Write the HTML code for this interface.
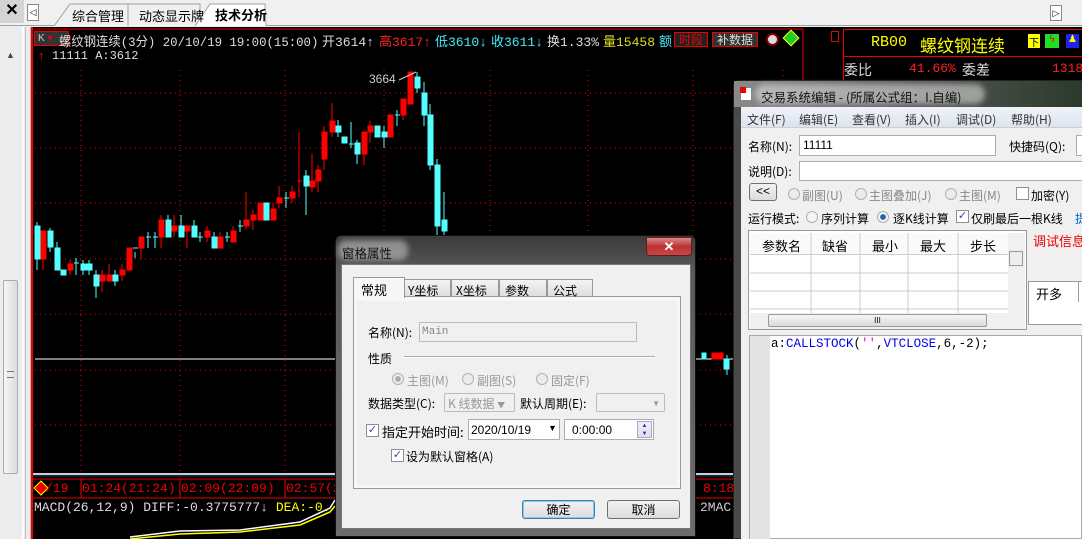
<!DOCTYPE html>
<html><head><meta charset="utf-8">
<style>
*{margin:0;padding:0;box-sizing:border-box}
body{width:1082px;height:539px;overflow:hidden;background:#f0f0f0;position:relative;font-family:"Liberation Sans","WenQuanYi Zen Hei",sans-serif;font-size:12px}
.a{position:absolute;white-space:nowrap}
.m{font-family:"Liberation Mono","WenQuanYi Zen Hei",monospace}
.cj{font-family:"WenQuanYi Zen Hei","Noto Sans CJK SC",sans-serif}
.inp{position:absolute;background:#fff;border:1px solid #abadb3}
.btn{position:absolute;border:1px solid #707070;border-radius:3px;background:linear-gradient(#f2f2f2,#dcdcdc);text-align:center;line-height:17px}
.rad{position:absolute;width:12px;height:12px;border-radius:50%;border:1px solid #b0b0b0;background:#ececec}
.chk{position:absolute;width:13px;height:13px;border:1px solid #8e8f8f;background:#fff;font-size:11px;line-height:11px;text-align:center;color:#2a4a9a}
</style></head><body>
<div class="a" style="left:0;top:0;width:1082px;height:26px;background:#f0f0f0;border-bottom:1px solid #a0a0a0"></div>
<div class="a" style="left:0;top:0;width:24px;height:23px;background:#d4d4d4;font-size:16px;text-align:center;line-height:22px;font-weight:bold">✕</div>
<div class="a" style="left:27px;top:4px;width:12px;height:17px;border:1px solid #888;background:#fff;font-size:9px;line-height:15px;text-align:center">◁</div>
<div class="a" style="left:1050px;top:5px;width:12px;height:16px;border:1px solid #888;background:#fff;font-size:9px;line-height:14px;text-align:center">▷</div>
<svg class="a" style="left:50px;top:3px" width="230" height="24"><path d="M4 23 L20 1 L78 1 L78 23" fill="#f0f0f0" stroke="#a0a0a0"/><path d="M78 23 L78 1 L150 1 L150 23" fill="#f0f0f0" stroke="#a0a0a0"/><path d="M145 23 L160 1 L215 1 L216 23" fill="#fff" stroke="#a0a0a0"/></svg>
<div class="a cj" style="left:72px;top:6px;font-size:13px">综合管理</div>
<div class="a cj" style="left:139px;top:6px;font-size:13px">动态显示牌</div>
<div class="a cj" style="left:215px;top:5px;font-size:13px;font-weight:bold">技术分析</div>
<div class="a" style="left:0;top:27px;width:31px;height:512px;background:#ececec;border-right:1px solid #b8b8b8"></div>
<div class="a" style="left:22px;top:27px;width:2px;height:512px;background:#fff"></div>
<div class="a" style="left:25px;top:27px;width:1px;height:512px;background:#c0c0c0"></div>
<div class="a" style="left:6px;top:50px;font-size:9px;color:#444">▲</div>
<div class="a" style="left:3px;top:280px;width:15px;height:194px;border:1px solid #aaa;border-radius:2px;background:linear-gradient(90deg,#f6f6f6,#dcdcdc)"></div>
<div class="a" style="left:7px;top:371px;width:7px;height:7px;border-top:1px solid #777;border-bottom:1px solid #777"></div>
<div class="a" style="left:31px;top:27px;width:811px;height:512px;background:#000;border-left:2px solid #e00"></div>
<svg class="a" style="left:0;top:0" width="842" height="539">
<g stroke="#e00" stroke-width="1" stroke-dasharray="1,4">
<line x1="35" y1="93" x2="842" y2="93"/><line x1="35" y1="148" x2="842" y2="148"/><line x1="35" y1="203" x2="842" y2="203"/><line x1="35" y1="259" x2="842" y2="259"/><line x1="35" y1="314" x2="842" y2="314"/><line x1="35" y1="370" x2="842" y2="370"/><line x1="35" y1="425" x2="842" y2="425"/>
<line x1="81" y1="70" x2="81" y2="474"/><line x1="180" y1="70" x2="180" y2="474"/><line x1="285" y1="70" x2="285" y2="474"/><line x1="384" y1="70" x2="384" y2="474"/><line x1="490" y1="70" x2="490" y2="474"/><line x1="588" y1="70" x2="588" y2="474"/><line x1="693" y1="70" x2="693" y2="474"/><line x1="783" y1="70" x2="783" y2="474"/>
</g>
<line x1="35" y1="359" x2="842" y2="359" stroke="#fff"/>
<line x1="33" y1="29" x2="803" y2="29" stroke="#e00"/>
<line x1="803" y1="29" x2="803" y2="80" stroke="#e00"/>
<line x1="33" y1="474" x2="842" y2="474" stroke="#ccd" stroke-width="2"/>
<line x1="33" y1="476" x2="842" y2="476" stroke="#246"/>
<line x1="33" y1="479" x2="842" y2="479" stroke="#e00"/>
<line x1="33" y1="498" x2="842" y2="498" stroke="#e00"/>
<g stroke="#e00"><line x1="81" y1="479" x2="81" y2="498"/><line x1="180" y1="479" x2="180" y2="498"/><line x1="285" y1="479" x2="285" y2="498"/></g>
<g stroke="#5ff" fill="#5ff">
<line x1="37" y1="222" x2="37" y2="270"/><rect x="35" y="226" width="5" height="33"/>
<line x1="50" y1="228" x2="50" y2="252"/><rect x="48" y="231" width="5" height="16"/>
<line x1="57" y1="242" x2="57" y2="270"/><rect x="55" y="248" width="5" height="22"/>
<rect x="61" y="270" width="5" height="5"/>
<line x1="76" y1="258" x2="76" y2="275"/><line x1="74" y1="263" x2="79" y2="263"/>
<line x1="83" y1="260" x2="83" y2="275"/><rect x="81" y="264" width="5" height="6"/>
<line x1="89" y1="260" x2="89" y2="275"/><rect x="87" y="264" width="5" height="6"/>
<line x1="96" y1="270" x2="96" y2="298"/><rect x="94" y="275" width="5" height="11"/>
<line x1="115" y1="270" x2="115" y2="286"/><rect x="113" y="275" width="5" height="6"/>
<line x1="135" y1="252" x2="135" y2="258"/><line x1="133" y1="248" x2="138" y2="248"/>
<line x1="148" y1="232" x2="148" y2="248"/><line x1="146" y1="237" x2="151" y2="237"/>
<line x1="155" y1="232" x2="155" y2="248"/><line x1="153" y1="237" x2="158" y2="237"/>
<line x1="168" y1="215" x2="168" y2="237"/><rect x="166" y="220" width="5" height="17"/>
<line x1="181" y1="215" x2="181" y2="237"/><rect x="179" y="226" width="5" height="11"/>
<line x1="194" y1="220" x2="194" y2="237"/><rect x="192" y="226" width="5" height="11"/>
<line x1="200" y1="232" x2="200" y2="242"/><line x1="198" y1="237" x2="203" y2="237"/>
<line x1="214" y1="232" x2="214" y2="248"/><rect x="212" y="237" width="5" height="11"/>
<line x1="227" y1="232" x2="227" y2="242"/><line x1="225" y1="237" x2="230" y2="237"/>
<line x1="240" y1="220" x2="240" y2="232"/><line x1="238" y1="226" x2="243" y2="226"/>
<rect x="264" y="203" width="5" height="17"/>
<line x1="286" y1="192" x2="286" y2="208"/><line x1="284" y1="198" x2="289" y2="198"/>
<line x1="306" y1="170" x2="306" y2="215"/><rect x="304" y="176" width="5" height="10"/>
<line x1="338" y1="120" x2="338" y2="137"/><rect x="336" y="126" width="5" height="6"/>
<rect x="342" y="137" width="5" height="6"/>
<line x1="351" y1="122" x2="351" y2="148"/><line x1="349" y1="144" x2="354" y2="144"/>
<line x1="357" y1="140" x2="357" y2="164"/><rect x="355" y="143" width="5" height="11"/>
<rect x="375" y="126" width="5" height="11"/>
<line x1="384" y1="126" x2="384" y2="148"/><rect x="382" y="132" width="5" height="5"/>
<line x1="397" y1="110" x2="397" y2="126"/><line x1="395" y1="115" x2="400" y2="115"/>
<line x1="417" y1="72" x2="417" y2="93"/><rect x="415" y="77" width="5" height="11"/>
<line x1="424" y1="82" x2="424" y2="126"/><rect x="422" y="93" width="5" height="22"/>
<line x1="430" y1="104" x2="430" y2="170"/><rect x="428" y="115" width="5" height="50"/>
<line x1="437" y1="159" x2="437" y2="236"/><rect x="435" y="165" width="5" height="61"/>
<line x1="444" y1="192" x2="444" y2="236"/><rect x="442" y="220" width="5" height="11"/>
<rect x="702" y="353" width="4" height="6"/><line x1="727" y1="355" x2="727" y2="375"/><rect x="724" y="359" width="5" height="10"/>
</g>
<g stroke="#f00" fill="#f00">
<line x1="43" y1="231" x2="43" y2="270"/><rect x="41" y="231" width="5" height="28"/>
<line x1="70" y1="260" x2="70" y2="275"/><rect x="68" y="264" width="5" height="6"/>
<line x1="102" y1="270" x2="102" y2="292"/><rect x="100" y="275" width="5" height="6"/>
<line x1="109" y1="264" x2="109" y2="281"/><rect x="107" y="275" width="5" height="6"/>
<line x1="122" y1="264" x2="122" y2="281"/><rect x="120" y="270" width="5" height="5"/>
<rect x="127" y="248" width="5" height="22"/>
<line x1="141" y1="237" x2="141" y2="259"/><rect x="139" y="237" width="5" height="11"/>
<line x1="161" y1="215" x2="161" y2="248"/><rect x="159" y="220" width="5" height="17"/>
<line x1="174" y1="215" x2="174" y2="237"/><rect x="172" y="226" width="5" height="5"/>
<line x1="187" y1="226" x2="187" y2="248"/><rect x="185" y="226" width="5" height="5"/>
<line x1="207" y1="226" x2="207" y2="242"/><rect x="205" y="231" width="5" height="6"/>
<line x1="220" y1="232" x2="220" y2="248"/><rect x="218" y="237" width="5" height="11"/>
<line x1="233" y1="226" x2="233" y2="242"/><rect x="231" y="231" width="5" height="11"/>
<line x1="246" y1="192" x2="246" y2="230"/><rect x="244" y="220" width="5" height="6"/>
<line x1="253" y1="210" x2="253" y2="230"/><rect x="251" y="215" width="5" height="5"/>
<rect x="258" y="203" width="5" height="17"/>
<line x1="273" y1="203" x2="273" y2="220"/><rect x="271" y="209" width="5" height="11"/>
<line x1="279" y1="186" x2="279" y2="208"/><rect x="277" y="198" width="5" height="5"/>
<line x1="292" y1="186" x2="292" y2="203"/><rect x="290" y="192" width="5" height="6"/>
<line x1="299" y1="132" x2="299" y2="197"/><line x1="297" y1="181" x2="302" y2="181"/>
<line x1="312" y1="154" x2="312" y2="192"/><rect x="310" y="181" width="5" height="6"/>
<line x1="318" y1="165" x2="318" y2="192"/><rect x="316" y="170" width="5" height="11"/>
<line x1="324" y1="126" x2="324" y2="170"/><rect x="322" y="132" width="5" height="27"/>
<line x1="332" y1="103" x2="332" y2="137"/><rect x="330" y="121" width="5" height="11"/>
<line x1="364" y1="132" x2="364" y2="165"/><rect x="362" y="132" width="5" height="22"/>
<line x1="370" y1="121" x2="370" y2="143"/><rect x="368" y="126" width="5" height="6"/>
<rect x="388" y="115" width="5" height="22"/>
<line x1="403" y1="99" x2="403" y2="120"/><rect x="401" y="99" width="5" height="16"/>
<rect x="408" y="72" width="5" height="32"/>
<rect x="712" y="353" width="5" height="6"/><rect x="718" y="353" width="5" height="6"/>
</g>
<line x1="399" y1="80" x2="416" y2="72" stroke="#ccc"/>
<text x="369" y="83" fill="#ccc" font-family="Liberation Sans" font-size="12">3664</text>
<polyline points="130,539 180,534 240,532 300,525 330,512 335,506" fill="none" stroke="#ff0" stroke-width="1.5"/>
<polyline points="130,537 180,531 240,530 300,522 330,508 335,500" fill="none" stroke="#fff" stroke-width="1.5"/>
<path d="M34 488 L41 481 L48 488 L41 495Z" fill="#e00" stroke="#ff0"/>
</svg>
<div class="a" style="left:34px;top:31px;width:35px;height:15px;border:1px solid #e00;background:#333;color:#ccc;font-size:10px;line-height:13px;padding-left:3px">K <span style="color:#e00">▾</span></div>
<div class="a m" style="left:59px;top:31px;color:#ddd;font-size:13px;transform:scaleX(0.95);transform-origin:left top">螺纹钢连续(3分) 20/10/19 19:00(15:00)</div>
<div class="a m" style="left:322px;top:31px;color:#ddd;font-size:13px">开3614↑</div>
<div class="a m" style="left:379px;top:31px;color:#f22;font-size:13px">高3617↑</div>
<div class="a m" style="left:435px;top:31px;color:#4ef;font-size:13px">低3610↓</div>
<div class="a m" style="left:491px;top:31px;color:#4ef;font-size:13px">收3611↓</div>
<div class="a m" style="left:547px;top:31px;color:#ddd;font-size:13px">换1.33%</div>
<div class="a m" style="left:603px;top:31px;color:#dd2;font-size:13px">量15458</div>
<div class="a m" style="left:659px;top:31px;color:#4ef;font-size:13px">额</div>
<div class="a cj" style="left:674px;top:32px;width:34px;height:15px;border:1px solid #e00;background:#222;color:#e00;font-size:12px;line-height:13px;text-align:center">时段</div>
<div class="a cj" style="left:712px;top:32px;width:46px;height:15px;border:1px solid #e00;background:#333;color:#ddd;font-size:12px;line-height:13px;text-align:center">补数据</div>
<div class="a" style="left:766px;top:33px;width:13px;height:13px;border-radius:50%;background:#ddd;border:2px solid #800"></div>
<div class="a" style="left:785px;top:32px;width:12px;height:12px;background:#2c2;transform:rotate(45deg);border:1px solid #ff0"></div>
<div class="a" style="left:831px;top:31px;width:8px;height:11px;border:1px solid #e00"></div>
<div class="a" style="left:38px;top:48px;color:#f00;font-size:13px;font-weight:bold">↑</div>
<div class="a m" style="left:52px;top:49px;color:#ddd;font-size:12px">11111 A:3612</div>
<div class="a m" style="left:45px;top:481px;color:#e00;font-size:13px">/19</div>
<div class="a m" style="left:82px;top:481px;color:#e00;font-size:13px">01:24(21:24)</div>
<div class="a m" style="left:181px;top:481px;color:#e00;font-size:13px">02:09(22:09)</div>
<div class="a m" style="left:286px;top:481px;color:#e00;font-size:13px">02:57(2</div>
<div class="a m" style="left:703px;top:481px;color:#e00;font-size:13px">8:18</div>
<div class="a m" style="left:34px;top:500px;color:#ddd;font-size:13px">MACD(26,12,9) DIFF:-0.3775777↓ <span style="color:#ff0">DEA:-0.</span></div>
<div class="a m" style="left:700px;top:500px;color:#ccc;font-size:13px">2MAC</div>
<div class="a" style="left:842px;top:27px;width:240px;height:512px;background:#000"></div>
<div class="a" style="left:843px;top:29px;width:239px;height:28px;border:1px solid #e00;border-right:none"></div>
<div class="a" style="left:843px;top:57px;width:239px;height:24px;border:1px solid #e00;border-top:none;border-right:none"></div>
<div class="a m" style="left:871px;top:34px;color:#ff0;font-size:15px">RB00</div>
<div class="a cj" style="left:920px;top:32px;color:#ff0;font-size:17px">螺纹钢连续</div>
<div class="a" style="left:1028px;top:34px;width:12px;height:14px;background:#ff0;font-size:10px;text-align:center;color:#000">下</div>
<div class="a" style="left:1045px;top:34px;width:14px;height:14px;background:#2d2;font-size:10px;text-align:center;color:#e00">ϟ</div>
<div class="a" style="left:1066px;top:34px;width:13px;height:14px;background:#22e;font-size:10px;text-align:center;color:#ff0">♟</div>
<div class="a cj" style="left:844px;top:60px;color:#ddd;font-size:14px">委比</div>
<div class="a m" style="left:909px;top:61px;color:#f22;font-size:13px">41.66%</div>
<div class="a cj" style="left:962px;top:60px;color:#ddd;font-size:14px">委差</div>
<div class="a m" style="left:1052px;top:61px;color:#f22;font-size:13px">1318</div>
<div class="a" style="left:733px;top:80px;width:349px;height:459px;background:#4a4a4a;border:1px solid #222;border-radius:6px 0 0 0"></div>
<div class="a" style="left:734px;top:81px;width:348px;height:26px;background:linear-gradient(90deg,#8a8a8a 0,#5a5a5a 50%,#2a3a2a 100%)"></div>
<div class="a" style="left:755px;top:84px;width:230px;height:20px;background:rgba(225,225,225,.55);border-radius:10px;filter:blur(3px)"></div>
<div class="a" style="left:740px;top:87px;width:12px;height:14px;background:#fff;border:1px solid #888"></div>
<div class="a" style="left:740px;top:87px;width:6px;height:6px;background:#e00"></div>
<div class="a cj" style="left:761px;top:87px;color:#111;font-size:12.5px">交易系统编辑 - (所属公式组：I.自编)</div>
<div class="a" style="left:741px;top:107px;width:341px;height:432px;background:#f0f0f0"></div>
<div class="a" style="left:741px;top:107px;width:341px;height:21px;background:linear-gradient(#f0f3f8,#dde4ee);border-bottom:1px solid #ccd"></div>
<div class="a cj" style="left:747px;top:111px;color:#333">文件(F)</div>
<div class="a cj" style="left:799px;top:111px;color:#333">编辑(E)</div>
<div class="a cj" style="left:852px;top:111px;color:#333">查看(V)</div>
<div class="a cj" style="left:905px;top:111px;color:#333">插入(I)</div>
<div class="a cj" style="left:956px;top:111px;color:#333">调试(D)</div>
<div class="a cj" style="left:1011px;top:111px;color:#333">帮助(H)</div>
<div class="a cj" style="left:748px;top:138px">名称(N):</div>
<div class="inp" style="left:799px;top:135px;width:197px;height:21px;padding:2px 3px">11111</div>
<div class="a cj" style="left:1009px;top:138px">快捷码(Q):</div>
<div class="inp" style="left:1076px;top:135px;width:10px;height:21px"></div>
<div class="a cj" style="left:748px;top:163px">说明(D):</div>
<div class="inp" style="left:799px;top:161px;width:290px;height:20px"></div>
<div class="btn" style="left:749px;top:183px;width:28px;height:18px;line-height:14px">&lt;&lt;</div>
<div class="rad" style="left:788px;top:188px"></div><div class="a cj" style="left:802px;top:187px;color:#888">副图(U)</div>
<div class="rad" style="left:855px;top:188px"></div><div class="a cj" style="left:869px;top:187px;color:#888">主图叠加(J)</div>
<div class="rad" style="left:945px;top:188px"></div><div class="a cj" style="left:959px;top:187px;color:#888">主图(M)</div>
<div class="chk" style="left:1016px;top:187px"></div><div class="a cj" style="left:1031px;top:187px">加密(Y)</div>
<div class="a cj" style="left:748px;top:210px">运行模式:</div>
<div class="rad" style="left:806px;top:211px;background:#f4f4f4"></div><div class="a cj" style="left:821px;top:210px">序列计算</div>
<div class="rad" style="left:877px;top:211px;background:radial-gradient(#26a 35%,#f4f4f4 45%)"></div><div class="a cj" style="left:893px;top:210px">逐K线计算</div>
<div class="chk" style="left:956px;top:210px">✓</div><div class="a cj" style="left:971px;top:210px">仅刷最后一根K线</div>
<div class="a cj" style="left:1075px;top:210px;color:#06c">提</div>
<div class="a" style="left:748px;top:230px;width:279px;height:100px;border:1px solid #999;background:#fff"></div>
<div class="a" style="left:750px;top:233px;width:258px;height:22px;background:#fafafa;border-bottom:1px solid #ccc"></div>
<svg class="a" style="left:750px;top:233px" width="258" height="80"><g stroke="#ccc"><line x1="61" y1="0" x2="61" y2="80"/><line x1="110" y1="0" x2="110" y2="80"/><line x1="158" y1="0" x2="158" y2="80"/><line x1="208" y1="0" x2="208" y2="80"/><line x1="0" y1="40" x2="258" y2="40"/><line x1="0" y1="58" x2="258" y2="58"/><line x1="0" y1="76" x2="258" y2="76"/></g></svg>
<div class="a cj" style="left:762px;top:236px;font-size:13px">参数名</div>
<div class="a cj" style="left:822px;top:236px;font-size:13px">缺省</div>
<div class="a cj" style="left:872px;top:236px;font-size:13px">最小</div>
<div class="a cj" style="left:920px;top:236px;font-size:13px">最大</div>
<div class="a cj" style="left:970px;top:236px;font-size:13px">步长</div>
<div class="a" style="left:1008px;top:233px;width:17px;height:80px;background:#f0f0f0"></div>
<div class="a" style="left:1009px;top:251px;width:14px;height:15px;border:1px solid #999;background:#eee"></div>
<div class="a" style="left:750px;top:313px;width:275px;height:16px;background:#f0f0f0"></div>
<div class="a" style="left:768px;top:314px;width:219px;height:13px;border:1px solid #999;border-radius:2px;background:linear-gradient(#f6f6f6,#dadada);font-size:8px;text-align:center;line-height:11px">III</div>
<div class="a cj" style="left:1033px;top:231px;color:#e00;font-size:13px">调试信息</div>
<div class="a" style="left:1028px;top:281px;width:60px;height:44px;border:1px solid #999;background:#fff"></div>
<div class="a" style="left:1029px;top:282px;width:50px;height:20px;background:#fff;border-right:1px solid #999"></div>
<div class="a cj" style="left:1036px;top:284px;font-size:13px">开多</div>
<div class="a" style="left:749px;top:335px;width:333px;height:204px;background:#fff;border:1px solid #aaa"></div>
<div class="a" style="left:750px;top:336px;width:20px;height:203px;background:#e4e4e4"></div>
<div class="a m" style="left:771px;top:337px;font-size:12.5px;color:#000">a:<span style="color:#00e">CALLSTOCK</span>(<span style="color:#e0e">''</span>,<span style="color:#00e">VTCLOSE</span>,6,-2);</div>
<div class="a" style="left:335px;top:235px;width:361px;height:302px;background:linear-gradient(#3a3a3a,#5a5a5a 12%,#6c6c6c);border:1px solid #111;border-radius:6px 6px 0 0"></div>
<div class="a" style="left:338px;top:240px;width:70px;height:20px;background:rgba(220,220,220,.5);border-radius:8px;filter:blur(3px)"></div>
<div class="a cj" style="left:342px;top:243px;color:#111;font-size:12.5px">窗格属性</div>
<div class="a" style="left:646px;top:237px;width:46px;height:19px;border:1px solid #522;border-radius:0 0 4px 4px;background:linear-gradient(#d88,#b33 50%,#c44);color:#fff;text-align:center;font-weight:bold;font-size:13px;line-height:17px">✕</div>
<div class="a" style="left:341px;top:264px;width:350px;height:265px;background:#f0f0f0;border:1px solid #777"></div>
<div class="a" style="left:353px;top:296px;width:328px;height:193px;background:#f7f7f7;border:1px solid #999"></div>
<div class="a" style="left:357px;top:301px;width:320px;height:185px;background:#f0f0f0"></div>
<div class="a" style="left:404px;top:279px;width:47px;height:18px;border:1px solid #999;background:linear-gradient(#f4f4f4,#dedede)"></div>
<div class="a" style="left:451px;top:279px;width:48px;height:18px;border:1px solid #999;background:linear-gradient(#f4f4f4,#dedede)"></div>
<div class="a" style="left:499px;top:279px;width:48px;height:18px;border:1px solid #999;background:linear-gradient(#f4f4f4,#dedede)"></div>
<div class="a" style="left:547px;top:279px;width:46px;height:18px;border:1px solid #999;background:linear-gradient(#f4f4f4,#dedede)"></div>
<div class="a" style="left:353px;top:277px;width:52px;height:21px;border:1px solid #999;border-bottom:none;background:#f7f7f7"></div>
<div class="a cj" style="left:361px;top:280px;font-size:13px">常规</div>
<div class="a cj" style="left:408px;top:282px">Y坐标</div>
<div class="a cj" style="left:456px;top:282px">X坐标</div>
<div class="a cj" style="left:505px;top:282px">参数</div>
<div class="a cj" style="left:553px;top:282px">公式</div>
<div class="a cj" style="left:368px;top:324px">名称(N):</div>
<div class="a" style="left:419px;top:322px;width:218px;height:20px;border:1px solid #bbb;background:#f0f0f0;color:#888;font-family:'Liberation Mono';font-size:11px;padding:3px 2px">Main</div>
<div class="a cj" style="left:368px;top:350px">性质</div>
<div class="a" style="left:404px;top:356px;width:251px;height:2px;border-top:1px solid #aaa;border-bottom:1px solid #fff"></div>
<div class="rad" style="left:392px;top:373px;background:radial-gradient(#aaa 35%,#eee 45%)"></div><div class="a cj" style="left:407px;top:372px;color:#999">主图(M)</div>
<div class="rad" style="left:462px;top:373px"></div><div class="a cj" style="left:477px;top:372px;color:#999">副图(S)</div>
<div class="rad" style="left:536px;top:373px"></div><div class="a cj" style="left:551px;top:372px;color:#999">固定(F)</div>
<div class="a cj" style="left:368px;top:395px">数据类型(C):</div>
<div class="a cj" style="left:444px;top:393px;width:71px;height:19px;border:1px solid #bbb;border-radius:2px;background:#f0f0f0;color:#999;padding:1px 3px">K 线数据 <span style="font-size:8px">▼</span></div>
<div class="a cj" style="left:520px;top:395px">默认周期(E):</div>
<div class="a" style="left:596px;top:393px;width:69px;height:19px;border:1px solid #bbb;border-radius:2px;background:#f0f0f0;color:#999;font-size:8px;text-align:right;padding:5px 4px">▼</div>
<div class="chk" style="left:366px;top:424px;color:#2a4aa0">✓</div>
<div class="a cj" style="left:382px;top:422px;font-size:13px">指定开始时间:</div>
<div class="inp" style="left:468px;top:419px;width:92px;height:21px;padding:3px 2px;font-size:12px">2020/10/19<span style="position:absolute;left:79px;top:3px;font-size:9px">▼</span></div>
<div class="inp" style="left:564px;top:419px;width:90px;height:21px;padding:3px 7px">0:00:00</div>
<div class="a" style="left:637px;top:421px;width:15px;height:17px;border:1px solid #aab;background:linear-gradient(#eef,#dde);font-size:6px;line-height:8px;text-align:center;color:#338">▲<br>▼</div>
<div class="chk" style="left:391px;top:449px;color:#2a4aa0">✓</div>
<div class="a cj" style="left:406px;top:448px">设为默认窗格(A)</div>
<div class="btn cj" style="left:522px;top:500px;width:73px;height:19px;border-color:#3c7fb1;box-shadow:inset 0 0 0 1px #8cd">确定</div>
<div class="btn cj" style="left:607px;top:500px;width:73px;height:19px">取消</div>
</body></html>
